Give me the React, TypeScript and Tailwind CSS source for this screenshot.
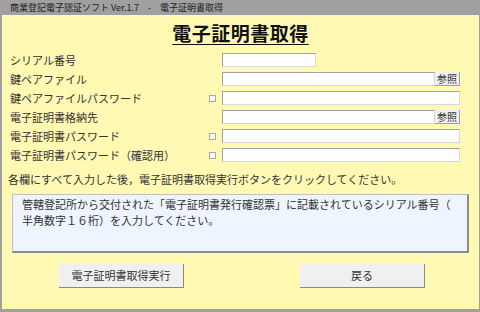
const jp = { fontFamily: '"Noto Sans CJK JP", "Noto Sans", sans-serif' };

type Row = { label: string; check?: boolean; browse?: boolean; short?: boolean };

const rows: Row[] = [
  { label: "シリアル番号", short: true },
  { label: "鍵ペアファイル", browse: true },
  { label: "鍵ペアファイルパスワード", check: true },
  { label: "電子証明書格納先", browse: true },
  { label: "電子証明書パスワード", check: true },
  { label: "電子証明書パスワード（確認用）", check: true },
];

function Field({ row }: { row: Row }) {
  return (
    <div className="flex items-center h-[14px]">
      <div className="w-[199px] text-[11px] leading-[14px] text-[#333333] whitespace-nowrap">{row.label}</div>
      <div className="w-[13px] flex items-center">
        {row.check && <div className="w-[7px] h-[7px] border border-[#a8a8a8] bg-[#f8f8f8]" />}
      </div>
      {row.short ? (
        <div className="w-[94px] h-[14px] bg-white border border-[#a0a0a0] border-b-[#d8d8d8] border-r-[#d8d8d8]" />
      ) : (
        <div className="flex">
          <div
            className={
              (row.browse ? "w-[213px]" : "w-[238px]") +
              " h-[14px] bg-white border border-[#a0a0a0] border-b-[#d8d8d8] border-r-[#d8d8d8]"
            }
          />
          {row.browse && (
            <button className="w-[25px] h-[14px] bg-[#f0f0f0] border-r border-b border-[#a0a0a0] text-[10px] leading-[12px] text-[#333333]">
              参照
            </button>
          )}
        </div>
      )}
    </div>
  );
}

export default function App() {
  return (
    <div className="w-[480px] h-[312px] flex flex-col bg-[#a0a0a0] overflow-hidden" style={jp}>
      <div className="h-[15px] pl-[10px] text-[9px] leading-[15px] text-[#222222] whitespace-nowrap">
        商業登記電子認証ソフト Ver.1.7　-　電子証明書取得
      </div>
      <div className="flex-1 flex flex-col bg-[#fff9b4] ml-[2px] mr-[1px] mb-[3px]">
        <div className="mt-[6px] h-[26px] flex justify-center">
          <span className="text-[19px] leading-[24px] font-bold underline underline-offset-[3px] text-[#111111] tracking-[0.5px]">
            電子証明書取得
          </span>
        </div>
        <div className="mt-[6px] pl-[8px] flex flex-col gap-[5px]">
          {rows.map((r) => (
            <Field key={r.label} row={r} />
          ))}
        </div>
        <div className="mt-[10px] pl-[6px] text-[11px] leading-[14px] text-[#333333] whitespace-nowrap">
          各欄にすべて入力した後，電子証明書取得実行ボタンをクリックしてください。
        </div>
        <div className="mt-[8px] ml-[10px] w-[457px] h-[59px] bg-[#eef5ff] border border-[#c0c0c0] border-r-2 border-b-2 border-r-[#8c8c8c] border-b-[#8c8c8c] pl-[9px] pt-[1px] text-[11px] leading-[16px] text-[#333333]">
          <div className="whitespace-nowrap">管轄登記所から交付された「電子証明書発行確認票」に記載されているシリアル番号（</div>
          <div className="whitespace-nowrap">半角数字１６桁）を入力してください。</div>
        </div>
        <div className="mt-[11px] flex">
          <button className="ml-[57px] w-[125px] h-[24px] bg-[#f0f0f0] border-r border-b border-[#888888] text-[11px] text-[#333333]">
            電子証明書取得実行
          </button>
          <button className="ml-[116px] w-[125px] h-[24px] bg-[#f0f0f0] border-r border-b border-[#888888] text-[11px] text-[#333333]">
            戻る
          </button>
        </div>
      </div>
    </div>
  );
}
